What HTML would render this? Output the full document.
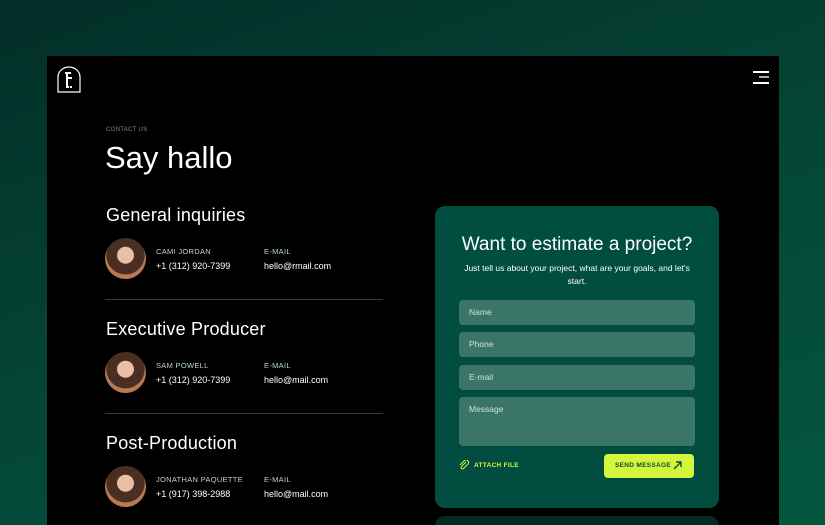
<!DOCTYPE html>
<html><head><style>
*{margin:0;padding:0;box-sizing:border-box}
html,body{width:825px;height:525px;overflow:hidden}
body{font-family:"Liberation Sans",sans-serif;background:linear-gradient(160deg,#032e27 0%,#044536 50%,#03573f 100%);position:relative}
.page{position:absolute;left:47px;top:56px;width:732px;height:469px;background:#000;overflow:hidden}
.abs{position:absolute}
.h2{color:#fff;font-size:18px;letter-spacing:0.2px}
.name{color:#bcd8c2;font-size:7.5px;letter-spacing:0.3px}
.val{color:#fff;font-size:9px}
.av{width:41px;height:41px;border-radius:50%;background:radial-gradient(circle at 50% 42%,#e7c0a6 0 26%,#4a2e22 28% 60%,#b87a50 62%)}
hr{position:absolute;border:0;border-top:1px solid #3a3a3a;width:278px;left:58px}
.card{position:absolute;left:388px;top:150px;width:284px;height:302px;background:#014d40;border-radius:10px}
.inp{position:absolute;left:24px;width:236px;height:25px;background:#3a7568;border-radius:4px;color:#cfe3da;font-size:8.5px;padding:7px 10px}
</style></head><body>
<div class="page">
<svg class="abs" style="left:10px;top:10px" width="24" height="27" viewBox="0 0 24 27"><path d="M1 26V11A11 10 0 0 1 23 11V26Z" fill="none" stroke="#fff" stroke-width="1.2"/><path d="M8 7h6M10 7v14h2M10 12h5M13 21h2" stroke="#fff" stroke-width="2" fill="none"/></svg>
<div class="abs" style="left:706px;top:15px;width:16px;height:1.5px;background:#fff"></div>
<div class="abs" style="left:712px;top:20px;width:10px;height:1.5px;background:#aaa"></div>
<div class="abs" style="left:706px;top:26px;width:16px;height:1.5px;background:#fff"></div>
<div class="abs" style="left:59px;top:71px;color:#8a8a8a;font-size:6px;letter-spacing:0.3px">CONTACT US</div>
<div class="abs" style="left:58px;top:84px;color:#fff;font-size:31px">Say hallo</div>

<div class="abs h2" style="left:59px;top:149px">General inquiries</div>
<div class="abs av" style="left:58px;top:182px"></div>
<div class="abs name" style="left:109px;top:191px">CAMI JORDAN</div>
<div class="abs val" style="left:109px;top:205px">+1 (312) 920-7399</div>
<div class="abs name" style="left:217px;top:191px">E-MAIL</div>
<div class="abs val" style="left:217px;top:205px">hello@rmail.com</div>
<hr style="top:243px">

<div class="abs h2" style="left:59px;top:263px">Executive Producer</div>
<div class="abs av" style="left:58px;top:296px"></div>
<div class="abs name" style="left:109px;top:305px">SAM POWELL</div>
<div class="abs val" style="left:109px;top:319px">+1 (312) 920-7399</div>
<div class="abs name" style="left:217px;top:305px">E-MAIL</div>
<div class="abs val" style="left:217px;top:319px">hello@mail.com</div>
<hr style="top:357px">

<div class="abs h2" style="left:59px;top:377px">Post-Production</div>
<div class="abs av" style="left:58px;top:410px"></div>
<div class="abs name" style="left:109px;top:419px">JONATHAN PAQUETTE</div>
<div class="abs val" style="left:109px;top:433px">+1 (917) 398-2988</div>
<div class="abs name" style="left:217px;top:419px">E-MAIL</div>
<div class="abs val" style="left:217px;top:433px">hello@mail.com</div>

<div class="card">
<div class="abs" style="left:0;width:284px;top:28px;text-align:center;color:#fff;font-size:19px">Want to estimate a project?</div>
<div class="abs" style="left:28px;width:228px;top:56px;text-align:center;color:#fff;font-size:8.5px;line-height:13px">Just tell us about your project, what are your goals, and let's start.</div>
<div class="inp" style="top:94px">Name</div>
<div class="inp" style="top:126px">Phone</div>
<div class="inp" style="top:159px">E-mail</div>
<div class="inp" style="top:191px;height:49px">Message</div>
<svg class="abs" style="left:24px;top:254px" width="11" height="11" viewBox="0 0 11 11"><path d="M7 2L2.5 6.5a1.4 1.4 0 0 0 2 2L9 4a2.5 2.5 0 0 0-3.5-3.5L1 5" fill="none" stroke="#d4f53c" stroke-width="1"/></svg>
<div class="abs" style="left:39px;top:256px;color:#d4f53c;font-size:6.5px;font-weight:bold;letter-spacing:0.3px">ATTACH FILE</div>
<div class="abs" style="left:169px;top:248px;width:90px;height:24px;background:#d4f53c;border-radius:4px"></div>
<div class="abs" style="left:180px;top:256px;color:#0a4a3a;font-size:6.5px;font-weight:bold;letter-spacing:0.3px">SEND MESSAGE</div>
<svg class="abs" style="left:238px;top:255px" width="9" height="9" viewBox="0 0 9 9"><path d="M1 8L8 1M3 1h5v5" fill="none" stroke="#0a4a3a" stroke-width="1.4"/></svg>
</div>
<div class="abs" style="left:388px;top:460px;width:284px;height:40px;background:#022b24;border-radius:10px"></div>
</div>
</body></html>
